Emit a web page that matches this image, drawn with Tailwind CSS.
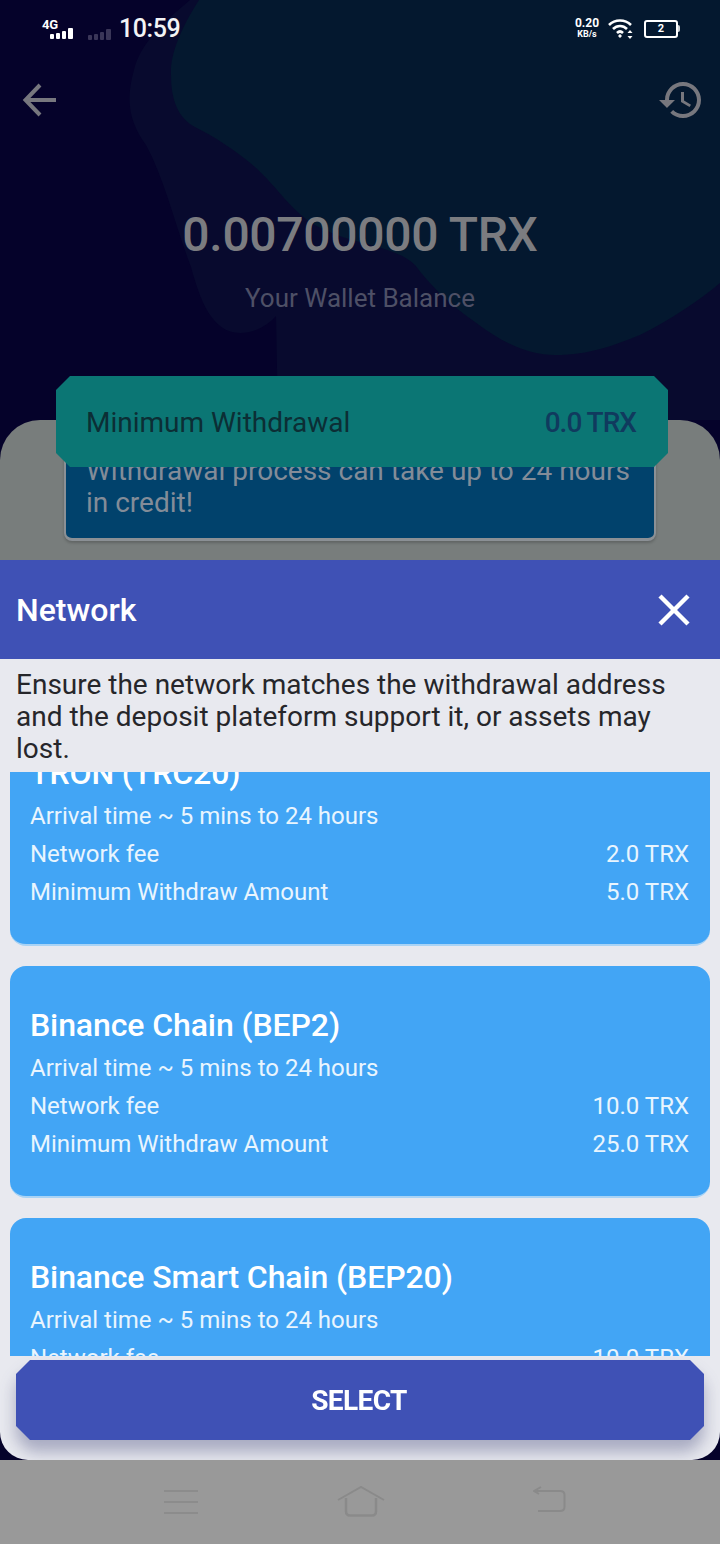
<!DOCTYPE html>
<html>
<head>
<meta charset="utf-8">
<script src="https://cdn.jsdelivr.net/npm/@tailwindcss/browser@4"></script>
</head>
<body class="m-0">
<div class="relative w-[720px] h-[1544px] overflow-hidden flex flex-col bg-[#05022a] font-['Roboto',sans-serif]">
  <!-- background blobs -->
  <svg class="absolute left-0 top-0" width="720" height="420" viewBox="0 0 720 420">
    <path d="M720 0 L190 0 C160 25 140 45 134 70 C124 105 132 125 146 145 C165 180 175 225 191 267 C200 300 212 333 240 333 C255 333 268 325 276 316 L278 420 L720 420 Z" fill="#080a2e"/>
    <path d="M199 0 C180 30 170 55 171 75 C171 100 178 118 195 127 C215 137 235 150 255 167 C280 190 290 210 315 225 C350 245 395 245 415 265 C430 285 450 305 475 322 C505 345 530 355 555 355 C590 355 615 345 640 335 C670 320 700 300 720 283 L720 0 Z" fill="#04182f"/>
  </svg>

  <!-- dimmed top -->
  <div class="relative h-[560px] shrink-0">
    <!-- status bar -->
    <div class="flex items-start justify-between h-[56px] pl-[42px] pr-[40px] pt-[16px]">
      <div class="flex items-center gap-[14px]">
        <div class="relative w-[32px] h-[24px]">
          <span class="absolute left-0 top-[1px] text-[13px] leading-[13px] font-bold text-white tracking-[-0.3px]">4G</span>
          <svg class="absolute left-[8px] top-[11px]" width="26" height="12" viewBox="0 0 26 12" fill="#fff"><rect x="0" y="6" width="4" height="5" rx="1"/><rect x="6" y="5" width="4" height="6" rx="1"/><rect x="12" y="3" width="4" height="8" rx="1"/><rect x="18" y="0" width="5" height="11" rx="1"/></svg>
        </div>
        <svg class="mt-[11px]" width="24" height="12" viewBox="0 0 24 12" fill="#3a3658"><rect x="0" y="6" width="4" height="5" rx="1"/><rect x="6" y="5" width="4" height="6" rx="1"/><rect x="12" y="3" width="4" height="8" rx="1"/><rect x="18" y="0" width="5" height="11" rx="1"/></svg>
        <span class="-ml-[7px] text-[25px] leading-[26px] font-medium text-[#f2f3f5] tracking-[-0.4px]">10:59</span>
      </div>
      <div class="flex items-center gap-[8px] pt-[2px]">
        <div class="flex flex-col items-center text-white font-bold w-[26px]">
          <span class="text-[12px] leading-[11px]">0.20</span>
          <span class="text-[9px] leading-[10px]">KB/s</span>
        </div>
        <svg width="26" height="20" viewBox="0 0 26 20" fill="none" stroke="#fff" stroke-width="2.6"><path d="M1 6 C7 0 17 0 23 6"/><path d="M5 10 C9 6 15 6 19 10"/><path d="M9 14 C11 12 13 12 15 14"/><circle cx="12" cy="17" r="1.2" fill="#fff" stroke-width="1"/><path d="M20 13 L22.5 16 L17.5 16 Z" fill="#fff" stroke="none" transform="translate(2 -2)"/><path d="M20 20 L22.5 17 L17.5 17 Z" fill="#fff" stroke="none" transform="translate(2 0)"/></svg>
        <div class="flex items-center ml-[2px]">
          <div class="w-[34px] h-[18px] rounded-[3px] border-2 border-white flex items-center justify-center text-white text-[11px] font-bold leading-none">2</div>
          <div class="w-[2px] h-[7px] bg-white/80 rounded-r"></div>
        </div>
      </div>
    </div>
    <!-- header -->
    <div class="flex items-center justify-between h-[88px] pl-[22px] pr-[15px]">
      <svg width="36" height="36" viewBox="0 0 36 36" fill="none" stroke="#77777e" stroke-width="4"><path d="M34 18 H4"/><path d="M18 3 L3.5 18 L18 33"/></svg>
      <svg width="48" height="48" viewBox="0 0 24 24" fill="#77777e"><path d="M13 3c-4.97 0-9 4.03-9 9H1l3.89 3.89.07.14L9 12H6c0-3.87 3.13-7 7-7s7 3.13 7 7-3.13 7-7 7c-1.93 0-3.68-.79-4.94-2.06l-1.42 1.42C8.27 19.99 10.51 21 13 21c4.97 0 9-4.03 9-9s-4.03-9-9-9zm-1 5v5l4.28 2.54.72-1.21-3.5-2.08V8H12z"/></svg>
    </div>
    <!-- balance -->
    <div class="flex flex-col items-center pt-[44px]">
      <div class="text-[48px] leading-[92px] font-medium text-[#7b7c80] mt-[1px] tracking-[-0.3px]">0.00700000 TRX</div>
      <div class="text-[26px] leading-[36px] text-[#4e5066] -mt-[1px]">Your Wallet Balance</div>
    </div>
    <!-- grey panel -->
    <div class="absolute left-0 right-0 top-[420px] bottom-0 bg-[#787d7c] rounded-t-[40px] px-[64px]">
      <div class="h-[121px] rounded-[8px] bg-[#01426c] border-b-[3px] border-x-[2px] border-[#8b9095] shadow-[0_2px_3px_rgba(0,0,0,0.2)] flex flex-col justify-end pb-[19px] pl-[20px] text-[28px] leading-[32px] text-[#838c98] overflow-hidden">
        <p>Withdrawal process can take up to 24 hours</p>
        <p>in credit!</p>
      </div>
    </div>
    <!-- teal bar -->
    <div class="absolute left-[56px] top-[376px] w-[612px] h-[91px] bg-[#0b7674] flex items-center justify-between pl-[30px] pr-[32px] pt-[2px] [clip-path:polygon(14px_0,calc(100%-14px)_0,100%_14px,100%_calc(100%-14px),calc(100%-14px)_100%,14px_100%,0_calc(100%-14px),0_14px)]">
      <span class="text-[28px] text-[#0c2e35]">Minimum Withdrawal</span>
      <span class="text-[28px] font-medium text-[#103a5e] tracking-[-1px]">0.0 TRX</span>
    </div>
  </div>

  <!-- modal -->
  <div class="relative h-[900px] shrink-0 bg-[#e8e9ef] rounded-b-[28px] flex flex-col overflow-hidden">
    <div class="h-[99px] bg-[#3f51b5] flex items-center justify-between pl-[16px] pr-[29px] shrink-0">
      <span class="text-[32px] font-medium text-white">Network</span>
      <svg width="34" height="34" viewBox="0 0 34 34" stroke="#fff" stroke-width="4.5"><path d="M3 3 L31 31"/><path d="M31 3 L3 31"/></svg>
    </div>
    <div class="h-[113px] px-[16px] pt-[10px] text-[28px] leading-[32px] text-[#26262a] shrink-0">
      Ensure the network matches the withdrawal address and the deposit plateform support it, or assets may lost.
    </div>
    <div class="h-[584px] overflow-hidden shrink-0 px-[10px]">
      <div class="-mt-[58px] flex flex-col gap-[20px]">
        <div class="h-[232px] rounded-[16px] bg-[#42a5f5] border-b-[2px] border-[#a9d3f5] pl-[20px] pr-[21px] pt-[39px] text-white">
          <div class="text-[32px] leading-[40px] font-medium tracking-[-0.1px]">TRON (TRC20)</div>
          <div class="mt-[4px] text-[24px] leading-[38px] text-[#e9f5fe]">Arrival time ~ 5 mins to 24 hours</div>
          <div class="flex justify-between text-[24px] leading-[38px] text-[#e9f5fe]"><span>Network fee</span><span>2.0 TRX</span></div>
          <div class="flex justify-between text-[24px] leading-[38px] text-[#e9f5fe]"><span>Minimum Withdraw Amount</span><span>5.0 TRX</span></div>
        </div>
        <div class="h-[232px] rounded-[16px] bg-[#42a5f5] border-b-[2px] border-[#a9d3f5] pl-[20px] pr-[21px] pt-[39px] text-white">
          <div class="text-[32px] leading-[40px] font-medium tracking-[-0.1px]">Binance Chain (BEP2)</div>
          <div class="mt-[4px] text-[24px] leading-[38px] text-[#e9f5fe]">Arrival time ~ 5 mins to 24 hours</div>
          <div class="flex justify-between text-[24px] leading-[38px] text-[#e9f5fe]"><span>Network fee</span><span>10.0 TRX</span></div>
          <div class="flex justify-between text-[24px] leading-[38px] text-[#e9f5fe]"><span>Minimum Withdraw Amount</span><span>25.0 TRX</span></div>
        </div>
        <div class="h-[232px] rounded-[16px] bg-[#42a5f5] border-b-[2px] border-[#a9d3f5] pl-[20px] pr-[21px] pt-[39px] text-white">
          <div class="text-[32px] leading-[40px] font-medium tracking-[-0.1px]">Binance Smart Chain (BEP20)</div>
          <div class="mt-[4px] text-[24px] leading-[38px] text-[#e9f5fe]">Arrival time ~ 5 mins to 24 hours</div>
          <div class="flex justify-between text-[24px] leading-[38px] text-[#e9f5fe]"><span>Network fee</span><span>10.0 TRX</span></div>
        </div>
      </div>
    </div>
    <div class="px-[16px] pt-[4px] pb-[20px] shrink-0">
      <div class="drop-shadow-[0_12px_8px_rgba(50,55,110,0.35)]">
        <div class="h-[80px] bg-[#3f51b5] flex items-center justify-center pr-[2px] pt-[1px] text-[28px] font-bold text-white tracking-[-0.6px] [clip-path:polygon(14px_0,calc(100%-14px)_0,100%_14px,100%_calc(100%-14px),calc(100%-14px)_100%,14px_100%,0_calc(100%-14px),0_14px)]">SELECT</div>
      </div>
    </div>
  </div>

  <!-- nav bar -->
  <div class="h-[84px] shrink-0 bg-[#999999] flex items-start pl-[164px] pt-[26px]">
    <svg class="mt-[3px]" width="34" height="26" viewBox="0 0 34 26" stroke="#8c8c8c" stroke-width="2"><path d="M0 2 H34 M0 13 H34 M0 24 H34"/></svg>
    <svg class="ml-[139px]" width="48" height="31" viewBox="0 0 48 31" fill="none" stroke="#8a8a8a" stroke-width="2"><path d="M1 14 L24 1 L47 14"/><path d="M9 12 V25 Q9 29.5 13 29.5 H35 Q39 29.5 39 25 V12" stroke-width="2.5"/></svg>
    <svg class="ml-[148px]" width="33" height="27" viewBox="0 0 33 27" fill="none" stroke="#8a8a8a" stroke-width="2"><path d="M1 5 H27 Q31.5 5 31.5 9 V21 Q31.5 25 27 25 H5"/><path d="M8 1 L1 5 L6 8"/></svg>
  </div>
</div>
</body>
</html>
